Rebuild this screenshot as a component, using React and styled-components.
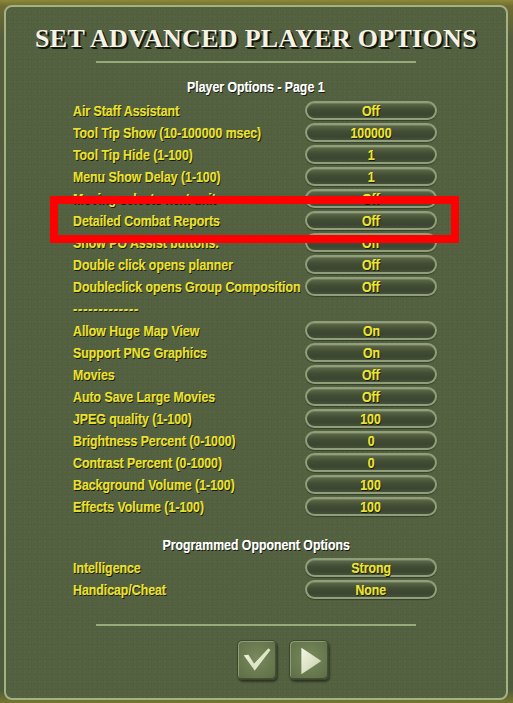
import React from "react";
import styled, { createGlobalStyle } from "styled-components";

const Global = createGlobalStyle`
  html, body { margin: 0; padding: 0; }
  body {
    width: 513px;
    height: 703px;
    overflow: hidden;
    background: linear-gradient(180deg, #8c8938 0px, #6f6d32 6px, #545c3e 40px, #4e5a3c 690px, #76772f 703px);
  }
  * { box-sizing: border-box; }
`;

const SANS = `"Liberation Sans", Arial, sans-serif`;

const Panel = styled.div`
  position: relative;
  margin: 5px 0 0 4px;
  width: 504px;
  height: 695px;
  border: 2px solid #a2b282;
  border-radius: 8px;
  background-color: #536140;
  background-image:
    radial-gradient(rgba(0,0,0,0.05) 1px, transparent 1px),
    radial-gradient(rgba(255,255,255,0.03) 1px, transparent 1px);
  background-size: 3px 3px, 5px 5px;
  background-position: 0 0, 1px 2px;
  padding-top: 16px;
  display: flex;
  flex-direction: column;
`;

const Title = styled.h1`
  margin: 0;
  font-family: "Liberation Serif", "Times New Roman", serif;
  font-weight: bold;
  font-size: 26px;
  line-height: 32px;
  text-align: center;
  color: #f6f3e6;
  text-shadow: 2px 2px 0 #15170d, 1px 1px 0 #15170d;
  letter-spacing: 0.3px;
`;

const Divider = styled.div`
  width: 320px;
  height: 2px;
  margin: ${(p) => p.$mt}px auto 0;
  background: #97aa7a;
`;

const Narrow = styled.span`
  display: inline-block;
  font-family: ${SANS};
  font-weight: bold;
  font-size: 15px;
  white-space: nowrap;
  letter-spacing: ${(p) => (p.$spaced ? "1.2px" : "0")};
  transform: scaleX(0.82);
  transform-origin: ${(p) => (p.$center ? "center" : "left")} center;
`;

const SectionHeader = styled.div`
  line-height: 22px;
  height: 22px;
  text-align: center;
  color: #ffffff;
  text-shadow: 1px 1px 0 #161a0e, 0.4px 0 0 #ffffff;
  margin-top: ${(p) => p.$mt}px;
  margin-bottom: ${(p) => p.$mb}px;
`;

const List = styled.div`
  display: flex;
  flex-direction: column;
`;

const Row = styled.div`
  display: grid;
  grid-template-columns: 232px 132px;
  height: 22px;
  padding-left: 67px;
  align-items: start;
`;

const Label = styled.div`
  line-height: 22px;
  color: #eae032;
  text-shadow: 1px 1px 0 #171909, 0.4px 0 0 #eae032;
  white-space: nowrap;
  min-width: 0;
`;

const ValueButton = styled.div`
  margin-top: 1px;
  height: 19px;
  border-radius: 10px;
  border: 2px solid #909e79;
  background: linear-gradient(180deg, #5e6b48 0%, #434e35 40%, #3b4530 75%, #46513a 100%);
  box-shadow: inset 0 1px 0 rgba(255,255,255,0.12), 0 1px 1px rgba(0,0,0,0.35);
  display: flex;
  align-items: center;
  justify-content: center;
  line-height: 15px;
  color: #eee334;
  text-shadow: 1px 1px 0 #171909, 0.4px 0 0 #eee334;
`;

const Footer = styled.div`
  display: flex;
  gap: 12px;
  margin: 14px 0 0 231px;
`;

const IconButton = styled.button`
  width: 40px;
  height: 40px;
  padding: 0;
  border: 1px solid #3d4730;
  border-radius: 5px;
  background: radial-gradient(circle at 50% 45%, #7a8a5e 0%, #6a7a50 55%, #5c6b45 100%);
  box-shadow: inset 1px 1px 0 rgba(220,232,190,0.35), inset -1px -1px 0 rgba(0,0,0,0.3), 1px 2px 2px rgba(0,0,0,0.45);
  display: flex;
  align-items: center;
  justify-content: center;
  cursor: pointer;
`;

const Annotation = styled.div`
  position: absolute;
  left: 44px;
  top: 189px;
  width: 409px;
  height: 47px;
  border: 8px solid #ff0000;
  z-index: 5;
  pointer-events: none;
`;

const page1 = [
  ["Air Staff Assistant", "Off"],
  ["Tool Tip Show (10-100000 msec)", "100000"],
  ["Tool Tip Hide (1-100)", "1"],
  ["Menu Show Delay (1-100)", "1"],
  ["Moving selects next unit", "Off"],
  ["Detailed Combat Reports", "Off"],
  ["Show PO Assist buttons.", "Off"],
  ["Double click opens planner", "Off"],
  ["Doubleclick opens Group Composition", "Off"],
  ["-------------", null],
  ["Allow Huge Map View", "On"],
  ["Support PNG Graphics", "On"],
  ["Movies", "Off"],
  ["Auto Save Large Movies", "Off"],
  ["JPEG quality (1-100)", "100"],
  ["Brightness Percent (0-1000)", "0"],
  ["Contrast Percent (0-1000)", "0"],
  ["Background Volume (1-100)", "100"],
  ["Effects Volume (1-100)", "100"],
];

const opponent = [
  ["Intelligence", "Strong"],
  ["Handicap/Cheat", "None"],
];

function OptionRows({ items }) {
  return (
    <List>
      {items.map(([label, value]) => (
        <Row key={label}>
          <Label><Narrow $spaced={value === null}>{label}</Narrow></Label>
          {value !== null ? (
            <ValueButton><Narrow $center>{value}</Narrow></ValueButton>
          ) : (
            <span />
          )}
        </Row>
      ))}
    </List>
  );
}

function CheckIcon() {
  return (
    <svg width="40" height="40" viewBox="0 0 40 40">
      <defs>
        <linearGradient id="chk" x1="0" y1="0" x2="1" y2="1">
          <stop offset="0" stopColor="#f2f6e4" />
          <stop offset="1" stopColor="#c9d4ad" />
        </linearGradient>
      </defs>
      <polygon points="6,15 11,14.5 17,24 32,8 34,9.5 17.5,31" fill="url(#chk)" />
      <polygon points="17.5,31 34,9.5 32,8 17,24" fill="#dfe7c9" />
    </svg>
  );
}

function PlayIcon() {
  return (
    <svg width="40" height="40" viewBox="0 0 40 40">
      <defs>
        <linearGradient id="ply" x1="0" y1="0" x2="1" y2="1">
          <stop offset="0" stopColor="#f3f7e6" />
          <stop offset="1" stopColor="#c4cfa6" />
        </linearGradient>
      </defs>
      <polygon points="12,7 33,21 12,35" fill="url(#ply)" />
    </svg>
  );
}

export default function App() {
  return (
    <>
      <Global />
      <Panel>
        <Title>SET ADVANCED PLAYER OPTIONS</Title>
        <Divider $mt={6} />
        <SectionHeader $mt={13} $mb={2}><Narrow $center>Player Options - Page 1</Narrow></SectionHeader>
        <OptionRows items={page1} />
        <SectionHeader $mt={16} $mb={1}><Narrow $center>Programmed Opponent Options</Narrow></SectionHeader>
        <OptionRows items={opponent} />
        <Divider $mt={23} />
        <Footer>
          <IconButton aria-label="Accept"><CheckIcon /></IconButton>
          <IconButton aria-label="Next page"><PlayIcon /></IconButton>
        </Footer>
        <Annotation />
      </Panel>
    </>
  );
}
